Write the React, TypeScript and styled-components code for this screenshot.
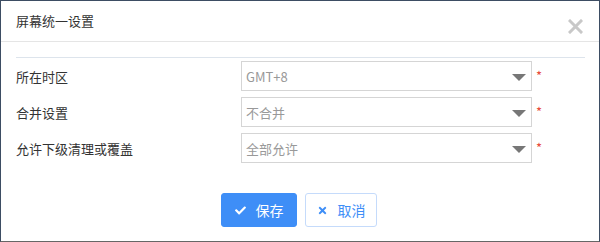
import React from 'react'
import styled, { createGlobalStyle } from 'styled-components'
import { FaCheck, FaTimes } from 'react-icons/fa'

const GlobalStyle = createGlobalStyle`
  html, body {
    margin: 0;
    padding: 0;
    background: #3d4d63;
  }
  body {
    font-family: "Microsoft YaHei", "Noto Sans CJK SC", "Liberation Sans", sans-serif;
    color: #333;
  }
`

const FIELDS = [
  { label: '所在时区', value: 'GMT+8' },
  { label: '合并设置', value: '不合并' },
  { label: '允许下级清理或覆盖', value: '全部允许' }
]

const App = () => {
  return (
    <>
      <GlobalStyle />
      <Modal>
        <Header>
          <Title>屏幕统一设置</Title>
          <CloseButton aria-label="close">
            <svg width="15" height="15" viewBox="0 0 15 15">
              <path d="M2 2 L13 13 M13 2 L2 13" stroke="#c8c8c8" strokeWidth="3" strokeLinecap="square" />
            </svg>
          </CloseButton>
        </Header>
        <Body>
          <Divider />
          <Form>
            {FIELDS.map((field) => (
              <Row key={field.label}>
                <Label>{field.label}</Label>
                <Select>
                  <SelectText>{field.value}</SelectText>
                  <Caret />
                </Select>
                <Required>*</Required>
              </Row>
            ))}
          </Form>
          <Footer>
            <Button $primary>
              <FaCheck size={11} />
              保存
            </Button>
            <Button>
              <FaTimes size={11} />
              取消
            </Button>
          </Footer>
        </Body>
      </Modal>
    </>
  )
}

const Modal = styled.div`
  box-sizing: border-box;
  width: 600px;
  height: 242px;
  background: #fff;
  border: 1px solid #3d4d63;
  border-bottom-color: #666;
  display: flex;
  flex-direction: column;
`

const Header = styled.div`
  height: 40px;
  border-bottom: 1px solid #e5e5e5;
  display: flex;
  align-items: center;
  justify-content: space-between;
  padding: 0 15px;
`

const Title = styled.div`
  font-size: 13px;
  color: #333;
  line-height: 18px;
`

const CloseButton = styled.div`
  display: flex;
  margin-top: 10px;
  margin-right: 1px;
`

const Body = styled.div`
  padding: 15px 14px 0 15px;
`

const Divider = styled.div`
  height: 1px;
  background: #dde4ec;
`

const Form = styled.div`
  display: flex;
  flex-direction: column;
  gap: 6px;
  padding-top: 3px;
`

const Row = styled.div`
  display: grid;
  grid-template-columns: 225px 291px auto;
  align-items: center;
  height: 30px;
`

const Label = styled.div`
  font-size: 13px;
  color: #333;
`

const Select = styled.div`
  box-sizing: border-box;
  height: 30px;
  border: 1px solid #d5d5d5;
  display: flex;
  align-items: center;
  justify-content: space-between;
  padding: 0 5px 0 4px;
`

const SelectText = styled.span`
  font-size: 13px;
  color: #999;
`

const Caret = styled.span`
  width: 0;
  height: 0;
  border-left: 7px solid transparent;
  border-right: 7px solid transparent;
  border-top: 7px solid #777;
  margin-top: 2px;
`

const Required = styled.span`
  color: #e74c3c;
  font-size: 13px;
  margin-left: 4px;
  line-height: 1;
  margin-top: -2px;
`

const Footer = styled.div`
  display: flex;
  justify-content: center;
  gap: 8px;
  margin-top: 30px;
  margin-left: -3px;
`

const Button = styled.div<{ $primary?: boolean }>`
  box-sizing: border-box;
  height: 34px;
  width: ${(p) => (p.$primary ? '76px' : '72px')};
  border-radius: 3px;
  display: flex;
  align-items: center;
  justify-content: center;
  gap: 10px;
  font-size: 14px;
  background: ${(p) => (p.$primary ? '#3e8ef7' : '#fff')};
  color: ${(p) => (p.$primary ? '#fff' : '#3e8ef7')};
  border: 1px solid ${(p) => (p.$primary ? '#3e8ef7' : '#c5dbfb')};
`

export default App
